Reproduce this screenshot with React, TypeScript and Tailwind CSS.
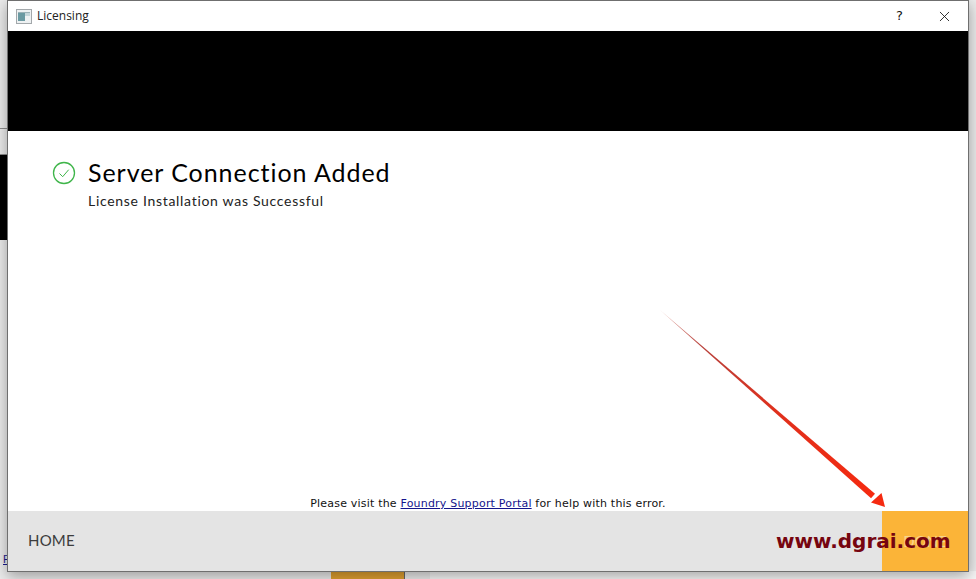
import { X } from 'lucide-react';

function AppIcon() {
  return (
    <svg width="16" height="15" viewBox="0 0 16 15">
      <rect x="0.5" y="0.5" width="15" height="14" fill="#eef1f2" stroke="#a3a8ab" />
      <rect x="2" y="3" width="7" height="9" fill="#6b9aa2" />
      <rect x="9" y="3" width="5" height="4" fill="#c5d6da" />
      <rect x="2" y="3" width="12" height="1" fill="#9bb2b7" />
    </svg>
  );
}

function SuccessIcon() {
  return (
    <svg width="24" height="24" viewBox="0 0 24 24" fill="none">
      <circle cx="12" cy="12" r="10.5" stroke="#3fb54a" strokeWidth="1.3" />
      <path d="M7.5 12.5l3.2 3.2 6-7" stroke="#3fb54a" strokeWidth="1" />
    </svg>
  );
}

function Arrow() {
  return (
    <svg className="absolute left-[655px] top-[305px]" width="235" height="205" viewBox="0 0 235 205">
      <defs>
        <linearGradient id="shaft" gradientUnits="userSpaceOnUse" x1="5" y1="5" x2="218" y2="191">
          <stop offset="0" stopColor="#e0a098" />
          <stop offset="0.2" stopColor="#b8403a" />
          <stop offset="0.55" stopColor="#e0301c" />
          <stop offset="1" stopColor="#f52a10" />
        </linearGradient>
      </defs>
      <polygon points="5,5 220,188.7 216,193.3" fill="url(#shaft)" />
      <polygon points="230,202 216,197.5 226.5,188" fill="#f52a10" />
    </svg>
  );
}

export default function App() {
  return (
    <div className="relative h-[579px] w-[976px] overflow-hidden bg-[#ececec] [font-family:'Liberation_Sans',sans-serif]">
      {/* what sits behind the dialog */}
      <div className="absolute left-0 top-[128px] h-px w-[8px] bg-[#8c8c8c]" />
      <div className="absolute left-0 top-[154px] h-[86px] w-[8px] border-t border-[#8c8c8c] bg-black" />
      <div className="absolute left-[3px] top-[553px] text-[11px] leading-[12px] text-[#1a1a8c] underline">F</div>
      <div className="absolute left-[331px] top-[571px] h-[8px] w-[74px] border-r border-[#666] bg-[#e0a030]" />
      <div className="absolute left-[430px] top-[571px] h-[8px] w-[546px] bg-[#f7f7f7]" />

      {/* dialog */}
      <div className="absolute left-[7px] top-0 flex h-[572px] w-[962px] flex-col border border-[#6f6f6f] bg-white shadow-[0_4px_14px_rgba(0,0,0,0.35)]">
        <div className="flex h-[30px] shrink-0 items-center pl-[8px]">
          <AppIcon />
          <span className="ml-[5px] text-[12px] text-[#222] [font-family:'Open_Sans',sans-serif]">Licensing</span>
          <span className="ml-auto mr-[33px] text-[13px] text-[#111] [font-family:'DejaVu_Sans',sans-serif]">?</span>
          <X className="mr-[15px] text-[#111]" size={17} strokeWidth={1.2} />
        </div>
        <div className="h-[100px] shrink-0 bg-black" />
        <div className="flex flex-1 flex-col">
          <div className="flex pl-[44px] pt-[26px]">
            <div className="pt-[4px]">
              <SuccessIcon />
            </div>
            <div className="ml-[12px]">
              <div className="text-[25px] leading-[30px] tracking-[0.95px] text-black [font-family:Lato,sans-serif]">Server Connection Added</div>
              <div className="mt-[4px] text-[14px] leading-[20px] tracking-[0.7px] text-[#222] [font-family:Lato,sans-serif]">License Installation was Successful</div>
            </div>
          </div>
          <div className="mt-auto text-center text-[11px] leading-[14px] tracking-[0.2px] text-[#111] [font-family:'DejaVu_Sans',sans-serif]">
            Please visit the <span className="text-[#14148c] underline">Foundry Support Portal</span> for help with this error.
          </div>
        </div>
        <div className="flex h-[60px] shrink-0 items-center justify-between bg-[#e4e4e4]">
          <span className="-mt-[2px] pl-[20px] text-[15px] tracking-[0.2px] text-[#3c3c3c] [font-family:Lato,sans-serif]">HOME</span>
          <div className="flex h-full w-[86px] items-center justify-center bg-[#fbb438] text-[15px] text-[#f7d58f] [font-family:Lato,sans-serif]">DONE</div>
        </div>
      </div>

      {/* watermark and annotation laid over the screenshot */}
      <Arrow />
      <div className="absolute left-[776px] top-[527px] text-[20px] font-bold leading-[28px] text-[#760510] [font-family:'DejaVu_Sans',sans-serif]">www.dgrai.com</div>
    </div>
  );
}
